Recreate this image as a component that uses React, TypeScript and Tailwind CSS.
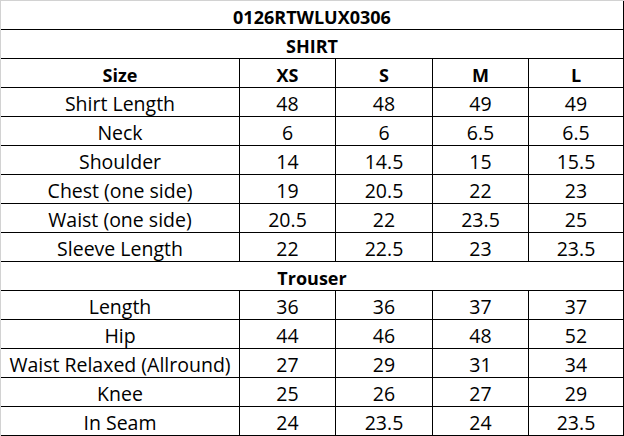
const shirt: [string, string, string, string, string][] = [
  ['Shirt Length', '48', '48', '49', '49'],
  ['Neck', '6', '6', '6.5', '6.5'],
  ['Shoulder', '14', '14.5', '15', '15.5'],
  ['Chest (one side)', '19', '20.5', '22', '23'],
  ['Waist (one side)', '20.5', '22', '23.5', '25'],
  ['Sleeve Length', '22', '22.5', '23', '23.5'],
];

const trouser: [string, string, string, string, string][] = [
  ['Length', '36', '36', '37', '37'],
  ['Hip', '44', '46', '48', '52'],
  ['Waist Relaxed (Allround)', '27', '29', '31', '34'],
  ['Knee', '25', '26', '27', '29'],
  ['In Seam', '24', '23.5', '24', '23.5'],
];

const widths = ['w-[239px]', 'w-[96px]', 'w-[97px]', 'w-[96px]', 'w-[95px]'];

function Row({ cells, bold }: { cells: string[]; bold?: boolean }) {
  return (
    <div className="flex h-[29px] border-b border-black">
      {cells.map((c, i) => (
        <div
          key={i}
          className={`${widths[i]} flex shrink-0 items-center justify-center border-r border-black pt-[3px] whitespace-nowrap ${bold ? 'text-[18px] font-bold' : ''}`}
        >
          {c}
        </div>
      ))}
    </div>
  );
}

function Banner({ text }: { text: string }) {
  return (
    <div className="flex h-[29px] items-center justify-center border-r border-b border-black pt-[3px] text-[18px] font-bold">
      {text}
    </div>
  );
}

export default function App() {
  return (
    <div
      className="w-[624px] h-[436px] overflow-hidden border-t border-l border-[#d2d2d2] bg-white text-[19.5px] leading-none text-black"
      style={{ fontFamily: '"Open Sans", Lato, sans-serif' }}
    >
      <Banner text="0126RTWLUX0306" />
      <Banner text="SHIRT" />
      <Row cells={['Size', 'XS', 'S', 'M', 'L']} bold />
      {shirt.map((r) => (
        <Row key={r[0]} cells={r} />
      ))}
      <Banner text="Trouser" />
      {trouser.map((r) => (
        <Row key={r[0]} cells={r} />
      ))}
    </div>
  );
}
